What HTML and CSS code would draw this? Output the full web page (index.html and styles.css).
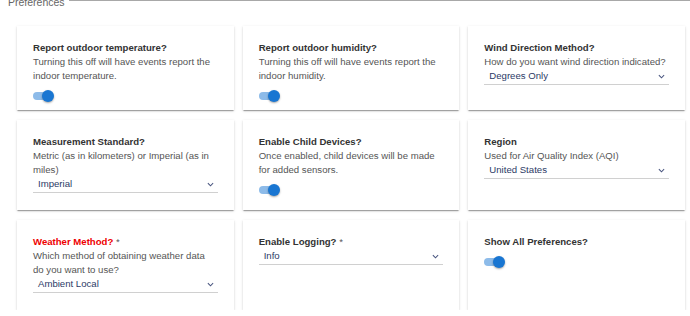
FILE: index.html
```html
<!DOCTYPE html>
<html lang="en">
<head>
    <meta charset="UTF-8">
    <title>Preferences</title>
    <link rel="stylesheet" href="styles.css">
</head>
<body>
    <div class="legend-row">
        <span class="legend">Preferences</span>
        <span class="legend-line"></span>
    </div>
    <main class="pref-grid">
        <div class="card">
            <div class="title">Report outdoor temperature?</div>
            <div class="desc">Turning this off will have events report the indoor temperature.</div>
            <div class="switch"><span class="track"></span><span class="thumb"></span></div>
        </div>
        <div class="card">
            <div class="title">Report outdoor humidity?</div>
            <div class="desc">Turning this off will have events report the indoor humidity.</div>
            <div class="switch"><span class="track"></span><span class="thumb"></span></div>
        </div>
        <div class="card">
            <div class="title">Wind Direction Method?</div>
            <div class="desc">How do you want wind direction indicated?</div>
            <div class="select"><span>Degrees Only</span><svg class="chev" viewBox="0 0 8 5" width="7" height="5"><polyline points="1,1 4,4 7,1" /></svg></div>
        </div>

        <div class="card">
            <div class="title">Measurement Standard?</div>
            <div class="desc">Metric (as in kilometers) or Imperial (as in miles)</div>
            <div class="select"><span>Imperial</span><svg class="chev" viewBox="0 0 8 5" width="7" height="5"><polyline points="1,1 4,4 7,1" /></svg></div>
        </div>
        <div class="card">
            <div class="title">Enable Child Devices?</div>
            <div class="desc">Once enabled, child devices will be made for added sensors.</div>
            <div class="switch"><span class="track"></span><span class="thumb"></span></div>
        </div>
        <div class="card">
            <div class="title">Region</div>
            <div class="desc">Used for Air Quality Index (AQI)</div>
            <div class="select"><span>United States</span><svg class="chev" viewBox="0 0 8 5" width="7" height="5"><polyline points="1,1 4,4 7,1" /></svg></div>
        </div>

        <div class="card">
            <div class="title"><span class="required">Weather Method?</span><span class="star"> *</span></div>
            <div class="desc">Which method of obtaining weather data do you want to use?</div>
            <div class="select"><span>Ambient Local</span><svg class="chev" viewBox="0 0 8 5" width="7" height="5"><polyline points="1,1 4,4 7,1" /></svg></div>
        </div>
        <div class="card">
            <div class="title">Enable Logging?<span class="star"> *</span></div>
            <div class="select"><span>Info</span><svg class="chev" viewBox="0 0 8 5" width="7" height="5"><polyline points="1,1 4,4 7,1" /></svg></div>
        </div>
        <div class="card">
            <div class="title">Show All Preferences?</div>
            <div class="switch"><span class="track"></span><span class="thumb"></span></div>
        </div>
    </main>
</body>
</html>
```

FILE: styles.css
```css
body {
    margin: 0;
    padding: 0;
    background-color: #ffffff;
    font-family: 'Liberation Sans', Arial, sans-serif;
    font-size: 9.6px;
    overflow: hidden;
}

.legend-row {
    display: flex;
    margin-top: -4px;
    padding-left: 8px;
}

.legend {
    font-size: 10.5px;
    line-height: 12px;
    color: #666666;
}

.legend-line {
    flex: 1;
    align-self: flex-start;
    margin: 4px 0 0 4px;
    border-top: 1px solid #a8a8a8;
}

.pref-grid {
    display: grid;
    grid-template-columns: repeat(3, 1fr);
    grid-template-rows: 84px 90px 90px;
    column-gap: 9px;
    row-gap: 10px;
    margin: 18px 5px 0 17px;
}

.card {
    background-color: #ffffff;
    padding: 15px 16px 0;
    box-shadow: 0 2px 1px -1px rgba(0, 0, 0, 0.2), 0 1px 1px 0 rgba(0, 0, 0, 0.14), 0 1px 3px 0 rgba(0, 0, 0, 0.12);
    line-height: 14px;
}

.title {
    font-weight: bold;
    color: #333333;
}

.required {
    color: #ee0000;
}

.star {
    font-weight: normal;
    color: #555555;
}

.desc {
    color: #555555;
}

.select {
    display: flex;
    justify-content: space-between;
    align-items: center;
    height: 14px;
    padding: 0 4px 1px 5px;
    border-bottom: 1px solid #d0d0d0;
    color: #2c3a66;
}

.chev polyline {
    fill: none;
    stroke: #4a5680;
    stroke-width: 1.2;
}

.switch {
    display: flex;
    align-items: center;
    margin-top: 6px;
    height: 14px;
}

.track {
    width: 19px;
    height: 8px;
    border-radius: 4px;
    background-color: #8dbbe9;
}

.thumb {
    width: 12px;
    height: 12px;
    margin-left: -10px;
    border-radius: 50%;
    background-color: #1976d2;
    box-shadow: 0 1px 2px rgba(0, 0, 0, 0.35);
}
```
